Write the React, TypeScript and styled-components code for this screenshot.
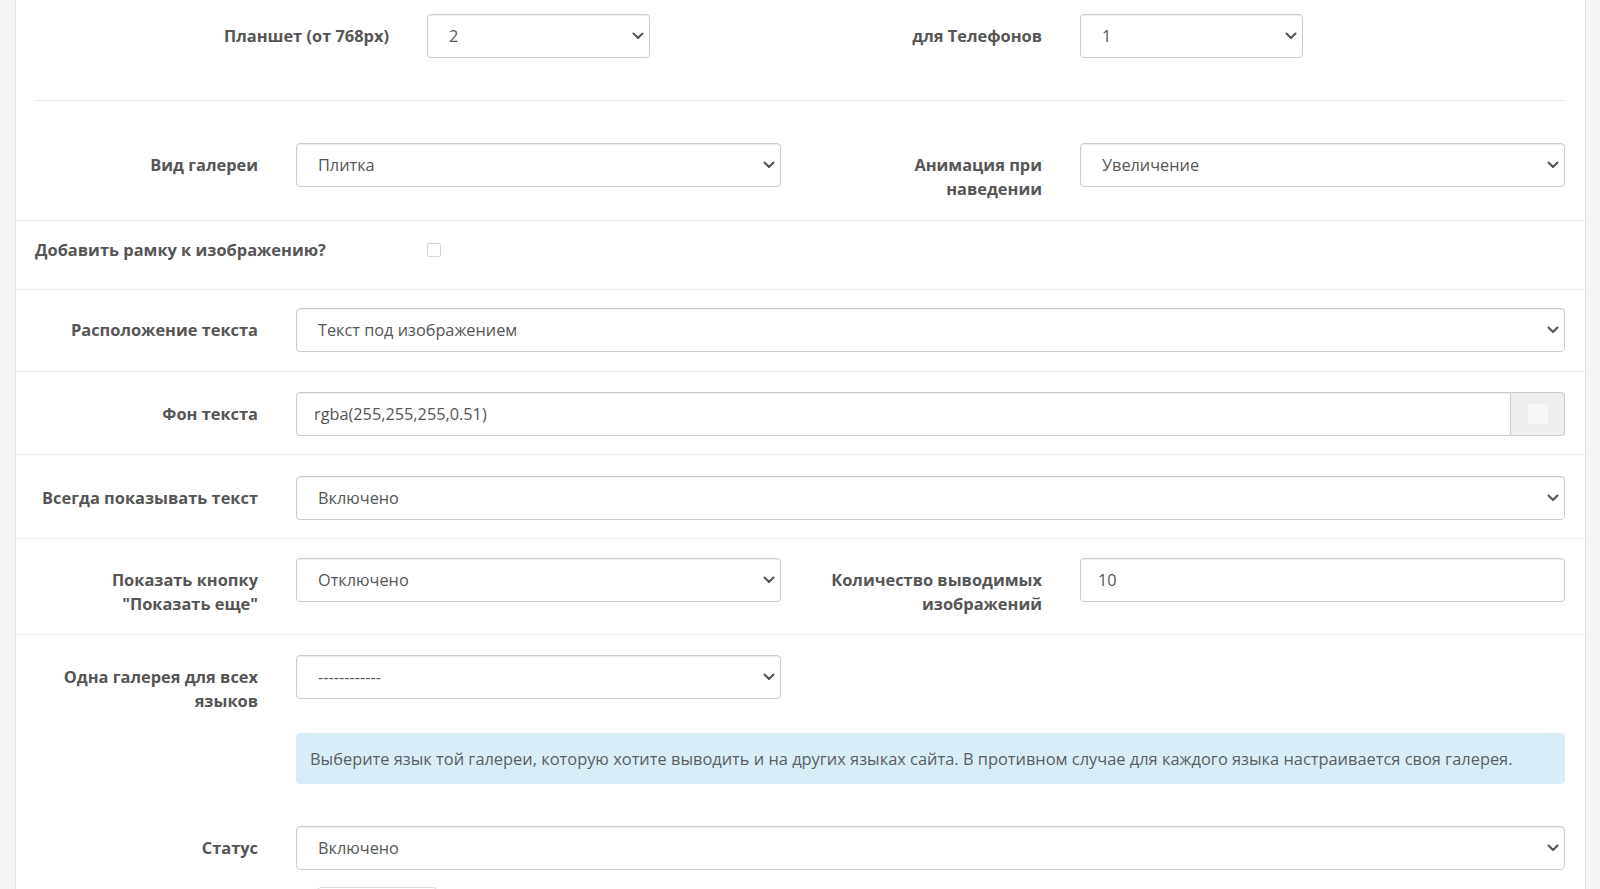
import React from "react"
import styled, { createGlobalStyle } from "styled-components"

const GlobalStyle = createGlobalStyle`
    html, body {
        margin: 0;
        padding: 0;
        background: #f5f5f5;
        font-family: "Open Sans", "Liberation Sans", sans-serif;
        color: #555555;
    }
    * {
        box-sizing: border-box;
    }
`

const Page = styled.div`
    height: 889px;
    overflow: hidden;
    padding: 0 14px 0 15px;
`

const Panel = styled.div`
    background: #ffffff;
    border-left: 1px solid #e3e3e3;
    border-right: 1px solid #e3e3e3;
    min-height: 100%;
`

const TopRow = styled.div`
    display: grid;
    grid-template-columns: 1fr 1fr;
    column-gap: 38px;
    padding: 14px 20px 42px 19px;
`

const Pair = styled.div`
    display: flex;
    gap: 38px;
    align-items: flex-start;
`

const Label = styled.label<{ $width?: number; $left?: boolean; $flat?: boolean }>`
    display: block;
    flex-shrink: 0;
    width: ${(p) => (p.$width ? `${p.$width}px` : "auto")};
    text-align: ${(p) => (p.$left ? "left" : "right")};
    padding: ${(p) => (p.$flat ? "0" : "10px 0 0 6px")};
    font-size: 16.4px;
    font-weight: 700;
    line-height: 24px;
    color: #555555;
`

const InsetRule = styled.hr`
    margin: 0 20px 0 19px;
    border: 0;
    border-top: 1px solid #ededed;
    height: 0;
`

const Row = styled.div<{ $cols?: string; $top?: number; $bottom?: number; $border?: boolean; $center?: boolean }>`
    display: grid;
    grid-template-columns: ${(p) => p.$cols ?? "223px 1fr"};
    column-gap: 38px;
    align-items: ${(p) => (p.$center ? "center" : "start")};
    padding: ${(p) => p.$top ?? 19}px 20px ${(p) => p.$bottom ?? 18}px 19px;
    border-top: ${(p) => (p.$border === false ? "none" : "1px solid #ededed")};
`

const Field = styled.div`
    display: flex;
    flex-direction: column;
    min-width: 0;
`

const SelectBox = styled.div<{ $width?: number }>`
    width: ${(p) => (p.$width ? `${p.$width}px` : "100%")};
    height: 44px;
    display: flex;
    align-items: center;
    justify-content: space-between;
    padding: 0 5px 0 21px;
    background: #ffffff;
    border: 1px solid #cccccc;
    border-radius: 4px;
    box-shadow: inset 0 1px 1px rgba(0, 0, 0, 0.075);
    font-size: 16.3px;
    color: #555555;
    white-space: nowrap;
`

const InputBox = styled.div<{ $joined?: boolean }>`
    flex: 1;
    height: 44px;
    display: flex;
    align-items: center;
    padding: 0 17px;
    background: #ffffff;
    border: 1px solid #cccccc;
    border-radius: ${(p) => (p.$joined ? "4px 0 0 4px" : "4px")};
    box-shadow: inset 0 1px 1px rgba(0, 0, 0, 0.075);
    font-size: 16.3px;
    color: #555555;
`

const InputGroup = styled.div`
    display: flex;
    width: 100%;
`

const ColorAddon = styled.div`
    width: 54px;
    height: 44px;
    display: flex;
    align-items: center;
    justify-content: center;
    background: #eeeeee;
    border: 1px solid #cccccc;
    border-left: 0;
    border-radius: 0 4px 4px 0;
`

const Swatch = styled.span`
    width: 20px;
    height: 20px;
    background: #f7f7f7;
`

const Checkbox = styled.span`
    display: block;
    width: 14px;
    height: 14px;
    border: 1px solid #d6d6d6;
    border-radius: 2px;
    background: #ffffff;
`

const Alert = styled.div`
    margin-top: 34px;
    padding: 15px 14px;
    background: #d9edf7;
    border-radius: 4px;
    font-size: 16.4px;
    line-height: 21px;
    color: #5a5f63;
    white-space: nowrap;
`

const NextButton = styled.div`
    margin: 17px 0 0 21px;
    width: 120px;
    height: 40px;
    border: 1px solid #dddddd;
    border-bottom: 0;
    border-radius: 4px 4px 0 0;
`

const Chevron = () => (
    <svg width="12" height="8" viewBox="0 0 12 8" fill="none">
        <polyline points="1.5,1.5 6,6 10.5,1.5" stroke="#555" strokeWidth="2.1" strokeLinecap="round" strokeLinejoin="round" />
    </svg>
)

const Select = ({ value, width }: { value: string; width?: number }) => (
    <SelectBox $width={width}>
        <span>{value}</span>
        <Chevron />
    </SelectBox>
)

export default function App() {
    return (
        <>
            <GlobalStyle />
            <Page>
                <Panel>
                    <TopRow>
                        <Pair>
                            <Label $width={354}>Планшет (от 768px)</Label>
                            <Select value="2" width={223} />
                        </Pair>
                        <Pair>
                            <Label $width={223}>для Телефонов</Label>
                            <Select value="1" width={223} />
                        </Pair>
                    </TopRow>
                    <InsetRule />

                    <Row $cols="223px 1fr 223px 1fr" $border={false} $top={42} $bottom={19}>
                        <Label>Вид галереи</Label>
                        <Select value="Плитка" />
                        <Label>Анимация при наведении</Label>
                        <Select value="Увеличение" />
                    </Row>

                    <Row $cols="354px 1fr" $top={17} $bottom={27} $center>
                        <Label $left $flat>Добавить рамку к изображению?</Label>
                        <Checkbox />
                    </Row>

                    <Row $top={18} $bottom={19}>
                        <Label>Расположение текста</Label>
                        <Select value="Текст под изображением" />
                    </Row>

                    <Row $top={20}>
                        <Label>Фон текста</Label>
                        <InputGroup>
                            <InputBox $joined>rgba(255,255,255,0.51)</InputBox>
                            <ColorAddon>
                                <Swatch />
                            </ColorAddon>
                        </InputGroup>
                    </Row>

                    <Row $top={21}>
                        <Label>Всегда показывать текст</Label>
                        <Select value="Включено" />
                    </Row>

                    <Row $cols="223px 1fr 223px 1fr">
                        <Label>Показать кнопку "Показать еще"</Label>
                        <Select value="Отключено" />
                        <Label>Количество выводимых изображений</Label>
                        <InputBox>10</InputBox>
                    </Row>

                    <Row $top={20} $bottom={0}>
                        <Label>Одна галерея для всех языков</Label>
                        <Field>
                            <Select value="------------" width={485} />
                            <Alert>
                                Выберите язык той галереи, которую хотите выводить и на других языках сайта. В противном случае для каждого языка настраивается своя галерея.
                            </Alert>
                        </Field>
                    </Row>

                    <Row $border={false} $top={42} $bottom={0}>
                        <Label>Статус</Label>
                        <Field>
                            <Select value="Включено" />
                            <NextButton />
                        </Field>
                    </Row>
                </Panel>
            </Page>
        </>
    )
}
